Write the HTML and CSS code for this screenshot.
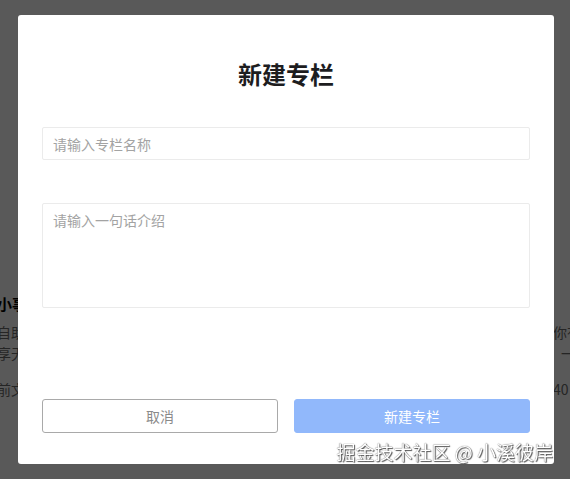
FILE: index.html
```html
<!DOCTYPE html>
<html lang="zh-CN">
<head>
<meta charset="utf-8">
<title>新建专栏</title>
<link rel="stylesheet" href="styles.css">
</head>
<body>
<div class="page">
  <div class="card card-left">
    <div class="card-title">小事记录</div>
    <div class="card-desc">自助记录</div>
    <div class="card-desc">享无限</div>
    <div class="card-meta">前文章</div>
  </div>
  <div class="card card-right">
    <div class="card-title">&nbsp;</div>
    <div class="card-desc">你有</div>
    <div class="card-desc indent">一</div>
    <div class="card-meta">40</div>
  </div>
</div>

<div class="mask"></div>

<div class="modal">
  <h1 class="modal-title">新建专栏</h1>
  <input class="field field-name" type="text" placeholder="请输入专栏名称">
  <textarea class="field field-intro" placeholder="请输入一句话介绍"></textarea>
  <div class="actions">
    <button class="btn btn-cancel" type="button">取消</button>
    <button class="btn btn-primary" type="button">新建专栏</button>
  </div>
</div>

<div class="watermark">掘金技术社区 @ 小溪彼岸</div>
</body>
</html>
```

FILE: styles.css
```css
html, body {
  margin: 0;
  padding: 0;
  height: 100%;
  overflow: hidden;
}

body {
  background: #ffffff;
  font-family: "Noto Sans CJK SC", "Noto Sans", "Liberation Sans", sans-serif;
}

/* background page (behind the mask) */
.page {
  display: flex;
  justify-content: space-between;
  padding-top: 295px;
  margin-left: -3px;
  margin-right: -40px;
}

.card {
  display: flex;
  flex-direction: column;
  width: 60px;
  overflow: hidden;
  white-space: nowrap;
}

.card-right {
  width: 57px;
}

.card-title {
  font-size: 15px;
  line-height: 18px;
  font-weight: 700;
  color: #000000;
}

.card-desc {
  font-size: 14px;
  line-height: 21px;
  color: #6b6b6b;
}

.card-title + .card-desc {
  margin-top: 9px;
}

.card-desc.indent {
  padding-left: 8px;
}

.card-meta {
  margin-top: 15px;
  font-size: 14px;
  line-height: 21px;
  color: #6b6b6b;
}

.mask {
  position: fixed;
  inset: 0;
  background: rgba(0, 0, 0, 0.65);
}

/* modal */
.modal {
  position: fixed;
  left: 18px;
  top: 15px;
  width: 536px;
  height: 449px;
  box-sizing: border-box;
  padding: 47px 24px 31px;
  background: #ffffff;
  border-radius: 3px;
  display: flex;
  flex-direction: column;
}

.modal-title {
  margin: 0;
  text-align: center;
  font-size: 24px;
  line-height: 24px;
  font-weight: 700;
  color: #1d1d1f;
}

.field {
  display: block;
  box-sizing: border-box;
  width: 100%;
  border: 1px solid #ebebeb;
  border-radius: 2px;
  font-family: inherit;
  font-size: 14px;
  color: #333;
  outline: none;
  background: #fff;
}

.field::placeholder {
  color: #a3a3a3;
}

.field-name {
  margin-top: 41px;
  height: 33px;
  padding: 0 10px;
  line-height: 31px;
}

.field-intro {
  margin-top: 43px;
  height: 105px;
  padding: 6px 10px;
  line-height: 20px;
  resize: none;
}

.actions {
  margin-top: auto;
  display: grid;
  grid-template-columns: 1fr 1fr;
  gap: 16px;
}

.btn {
  height: 34px;
  border-radius: 3px;
  font-family: inherit;
  font-size: 14px;
  cursor: pointer;
}

.btn-cancel {
  background: #ffffff;
  border: 1px solid #a9a9a9;
  color: #8a8a8a;
}

.btn-primary {
  background: #91b8fb;
  border: 1px solid #91b8fb;
  color: #ffffff;
}

.watermark {
  position: fixed;
  right: 17px;
  top: 439px;
  font-size: 19px;
  line-height: 26px;
  color: #ffffff;
  white-space: nowrap;
  text-shadow: 0 0 1px #3a3a3a, 1px 1px 1px #555555;
}
```
